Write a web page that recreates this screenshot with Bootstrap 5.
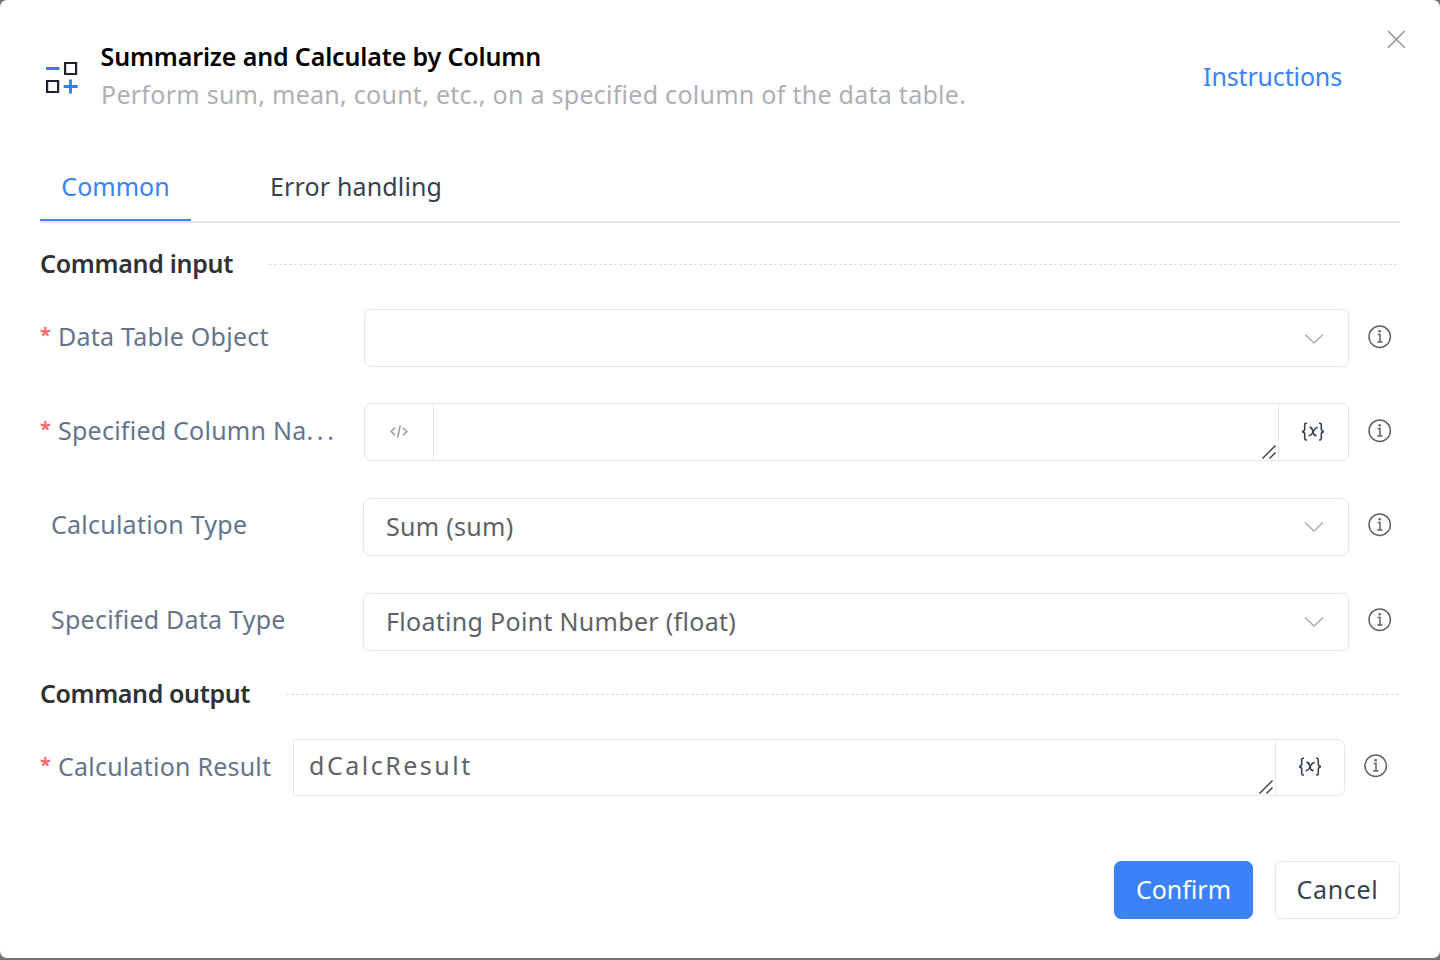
<!DOCTYPE html>
<html lang="en">
<head>
<meta charset="utf-8">
<title>Summarize and Calculate by Column</title>
<link href="https://cdn.jsdelivr.net/npm/bootstrap@5.3.0/dist/css/bootstrap.min.css" rel="stylesheet">
<style>
body{background:#757272;font-family:"Noto Sans",sans-serif;font-size:25px;line-height:36px;height:960px;overflow:hidden}
.dialog{height:958px;border-radius:7px;padding:0 40px;background:#fff;position:relative}
.head-row{height:152px;padding-top:38px}
.head-icon{width:34px;height:34px;margin:22px 21px 0 5px}
.title{color:#000;font-weight:600;letter-spacing:-.14px;padding-left:.6px}
.desc{color:#b0aeb5;line-height:38px;padding:1px 0 0 1px;letter-spacing:.27px}
.help-link{color:#3b82f6;margin:20px 58px 0 0;letter-spacing:-.15px}
.x-btn{position:absolute;right:34px;top:30px;line-height:0}
.tabs{height:71px;border-bottom:2px solid #e4e7ed}
.tabs .nav-link{color:#374151;padding:16px 0 0;height:69px;border:0;border-radius:0;letter-spacing:.15px;margin-left:79px}
.tabs .nav-link.active{color:#3b82f6;width:151px;border-bottom:2px solid #3b82f6;text-align:center;letter-spacing:0;margin-left:0}
.sect{height:36px;color:#303133;font-weight:600;letter-spacing:-.3px}
.sect span{margin-top:-2px}
.sect i{height:1px;background:repeating-linear-gradient(90deg,#dcdfe6 0 3px,#fff 3px 5px)}
.sect-in{margin-top:23px}
.sect-in i{margin-left:36px}
.sect-out{margin-top:25px;letter-spacing:-.38px}
.sect-out i{margin-left:36px}
.frow{height:58px;padding-right:8px}
.lbl{color:#64748b;width:324px;height:36px;white-space:nowrap;margin-top:-4px;letter-spacing:.24px}
.opt .lbl{width:323px;padding-left:11px;margin-top:-6px}
.opt .inf{margin-top:-5px}
.opt .chev{margin-top:0}
.dots{letter-spacing:3.700px;padding-left:0}
.star{color:#f56c6c;width:18px;font-size:20px;font-weight:700;letter-spacing:0;line-height:34px}
.box{border:1px solid #e4e7ed;border-radius:7px;height:58px;color:#606266;letter-spacing:.3px}
.cell{width:69px;height:100%}
.cell.l{border-right:1px solid #e4e7ed}
.cell.r{width:70px;border-left:1px solid #e4e7ed;padding-right:1px}
.area{position:relative;height:100%}
.grip{position:absolute;right:1px;bottom:0}
.chev{margin-right:24.500px;margin-top:2px}
.chosen{margin:-2px 0 0 22px}
.inf{margin:-3px 0 0 19px;flex:none}
.out{margin-top:26px;padding-right:12px}
.out .lbl{width:253px;margin-top:-3px;letter-spacing:.22px}
.out .box{height:57px;border-radius:0 7px 7px 0}
.out .area{letter-spacing:2.500px;padding:7px 0 0 15px}
.out .cell.r{width:69px}
.btn-x{height:58px;border-radius:7px;font-size:25px;line-height:36px;padding:0 0 2px;border:1px solid #e4e7ed;color:#374151;background:#fff;width:125px;letter-spacing:.7px}
.btn-x.ok{background:#3b82f6;border-color:#3b82f6;color:#fff;width:139px;letter-spacing:0}
</style>
</head>
<body>
<svg width="0" height="0" class="position-absolute">
<symbol id="info" viewBox="0 0 24 24"><g fill="none" stroke="#606266" stroke-width="1.5"><circle cx="11.700" cy="11.700" r="10.700"/><path d="M9.700 9.600H12v7.300M9.200 17h5.300"/></g><circle cx="11.700" cy="6.300" r="1.300" fill="#606266"/></symbol>
<symbol id="chev" viewBox="0 0 20 12"><path d="M1 1.500 10 10l9-8.500" fill="none" stroke="#a8abb2" stroke-width="1.400"/></symbol>
<symbol id="grip" viewBox="0 0 16 16"><path d="M1.500 14.500 14.500 1.500M8.500 14.500l6-6" fill="none" stroke="#444" stroke-width="1.500"/></symbol>
<symbol id="vars" viewBox="0 0 24 20"><g fill="none" stroke="#374151" stroke-width="1.600"><path d="M6 1.200H5Q3.700 1.200 3.700 2.700V7Q3.700 9.300 1 9.600 3.700 9.900 3.700 12.200V16.500Q3.700 18 5 18H6M18 1.200h1Q20.300 1.200 20.300 2.700V7Q20.300 9.300 23 9.600 20.300 9.900 20.300 12.200V16.500Q20.300 18 19 18H18"/><path stroke-width="1.800" d="M8.500 5.600Q10.500 5 11.300 7.500L12.600 11.800Q13.400 14 15.600 13.200"/><path stroke-width="1.500" d="M16.800 5.500Q14.800 5.200 13.300 7.800L11 11.600Q9.500 13.900 7.600 13.400"/></g></symbol>
</svg>
<main class="dialog">
  <header class="head-row d-flex align-items-start">
    <svg class="head-icon" viewBox="0 0 34 34" fill="none" stroke-width="2.200"><path d="M1 8.500h13.500M18.700 26.500h14M25.500 19.500v14" stroke="#2b7fff" stroke-width="2.800"/><path d="M20.100 3h11v11h-11zM2.100 21h11v11h-11z" stroke="#22202f"/></svg>
    <div class="flex-grow-1"><div class="title">Summarize and Calculate by Column</div><div class="desc">Perform sum, mean, count, etc., on a specified column of the data table.</div></div>
    <a class="help-link text-decoration-none" href="#">Instructions</a>
    <a class="x-btn" href="#" aria-label="Close"><svg width="19" height="19" viewBox="0 0 19 19"><path d="M1 1l16.800 16.800M17.800 1 1 17.800" stroke="#909399" stroke-width="1.500"/></svg></a>
  </header>
  <nav class="tabs nav">
    <a class="nav-link active" href="#">Common</a>
    <a class="nav-link" href="#">Error handling</a>
  </nav>
  <div class="sect sect-in d-flex align-items-center"><span>Command input</span><i class="flex-grow-1"></i></div>
  <div class="frow d-flex align-items-center" style="margin-top:27px">
    <div class="lbl d-flex"><span class="star">*</span><span>Data Table Object</span></div>
    <div class="box flex-grow-1 d-flex align-items-center justify-content-end"><svg class="chev" width="20" height="12"><use href="#chev"/></svg></div>
    <svg class="inf" width="24" height="24"><use href="#info"/></svg>
  </div>
  <div class="frow d-flex align-items-center" style="margin-top:36px">
    <div class="lbl d-flex"><span class="star">*</span><span>Specified Column Na<span class="dots">...</span></span></div>
    <div class="box flex-grow-1 d-flex">
      <div class="cell l d-flex align-items-center justify-content-center"><svg width="18" height="14" viewBox="0 0 18 14" fill="none" stroke="#909399" stroke-width="1.400"><path d="M5.200 2.700 1 6.500l4.200 3.800M12.800 2.700 17 6.500l-4.200 3.800M10.300.3 7.700 12.700"/></svg></div>
      <div class="area flex-grow-1"><svg class="grip" width="16" height="16"><use href="#grip"/></svg></div>
      <div class="cell r d-flex align-items-center justify-content-center"><svg width="24" height="20"><use href="#vars"/></svg></div>
    </div>
    <svg class="inf" width="24" height="24"><use href="#info"/></svg>
  </div>
  <div class="frow opt d-flex align-items-center" style="margin-top:37px">
    <div class="lbl">Calculation Type</div>
    <div class="box flex-grow-1 d-flex align-items-center justify-content-between"><span class="chosen">Sum (sum)</span><svg class="chev" width="20" height="12"><use href="#chev"/></svg></div>
    <svg class="inf" width="24" height="24"><use href="#info"/></svg>
  </div>
  <div class="frow opt d-flex align-items-center" style="margin-top:37px">
    <div class="lbl">Specified Data Type</div>
    <div class="box flex-grow-1 d-flex align-items-center justify-content-between"><span class="chosen">Floating Point Number (float)</span><svg class="chev" width="20" height="12"><use href="#chev"/></svg></div>
    <svg class="inf" width="24" height="24"><use href="#info"/></svg>
  </div>
  <div class="sect sect-out d-flex align-items-center"><span>Command output</span><i class="flex-grow-1"></i></div>
  <div class="frow out d-flex align-items-center">
    <div class="lbl d-flex"><span class="star">*</span><span>Calculation Result</span></div>
    <div class="box flex-grow-1 d-flex">
      <div class="area flex-grow-1">dCalcResult<svg class="grip" width="16" height="16"><use href="#grip"/></svg></div>
      <div class="cell r d-flex align-items-center justify-content-center"><svg width="24" height="20"><use href="#vars"/></svg></div>
    </div>
    <svg class="inf" width="24" height="24"><use href="#info"/></svg>
  </div>
  <footer class="d-flex justify-content-end" style="gap:22px;margin-top:65px">
    <button class="btn-x ok d-block">Confirm</button>
    <button class="btn-x d-block">Cancel</button>
  </footer>
</main>
<script src="https://cdn.jsdelivr.net/npm/bootstrap@5.3.0/dist/js/bootstrap.bundle.min.js"></script>
</body>
</html>
